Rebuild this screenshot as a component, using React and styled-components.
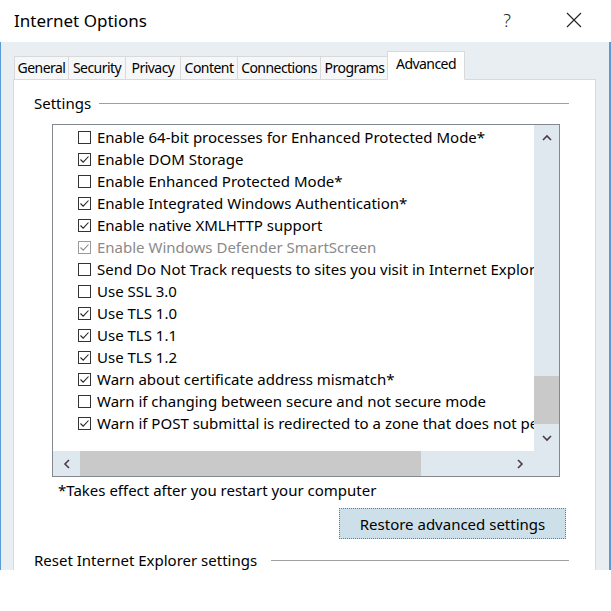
import React from 'react';
import styled, { createGlobalStyle } from 'styled-components';

const GlobalStyle = createGlobalStyle`
  html, body {
    margin: 0;
    padding: 0;
    background: #ffffff;
  }
  body {
    font-family: "Noto Sans", "Liberation Sans", sans-serif;
    color: #000;
  }
`;

const Window = styled.div`
  width: 611px;
  display: flex;
  flex-direction: column;
`;

const TitleBar = styled.div`
  height: 42px;
  display: flex;
  align-items: center;
  padding-left: 14px;
  background: #ffffff;
  font-size: 17px;
`;

const Title = styled.div`
  flex: 1;
  padding-bottom: 2px;
`;

const HelpButton = styled.div`
  width: 60px;
  text-align: center;
  font-size: 18px;
  font-weight: 300;
  color: #222;
  padding-bottom: 3px;
`;

const CloseButton = styled.div`
  width: 74px;
  display: flex;
  justify-content: center;
  padding-bottom: 3px;
`;

const Body = styled.div`
  height: 528px;
  overflow: hidden;
  box-sizing: border-box;
  background: #e8eef1;
  border-left: 1px solid #5b9bd5;
  border-right: 2px solid #5b9bd5;
  padding: 10px 12px 0 12px;
  display: flex;
  flex-direction: column;
`;

const TabStrip = styled.div`
  display: flex;
  align-items: flex-end;
  height: 28px;
  position: relative;
  z-index: 1;
  margin-bottom: -1px;
`;

const Tab = styled.div`
  box-sizing: border-box;
  width: ${p => p.$w}px;
  height: ${p => (p.$active ? 29 : 24)}px;
  padding-bottom: ${p => (p.$active ? 5 : 1)}px;
  display: flex;
  align-items: center;
  justify-content: center;
  white-space: nowrap;
  font-size: 14px;
  letter-spacing: -0.55px;
  background: ${p => (p.$active ? '#ffffff' : '#f6f7f8')};
  border: 1px solid #d9d9d9;
  border-bottom: ${p => (p.$active ? '1px solid #ffffff' : '1px solid #d9d9d9')};
  margin-left: ${p => (p.$first ? 1 : p.$active ? -2 : -1)}px;
  position: relative;
  z-index: ${p => (p.$active ? 2 : 1)};
`;

const Panel = styled.div`
  flex: 1;
  background: #ffffff;
  border: 1px solid #d9d9d9;
  margin-right: 1px;
  padding: 13px 26px 0 20px;
  display: flex;
  flex-direction: column;
`;

const GroupHeader = styled.div`
  display: flex;
  align-items: center;
  height: 20px;
  font-size: 15px;
`;

const GroupLine = styled.div`
  flex: 1;
  height: 1px;
  background: #a0a0a0;
  margin-left: ${p => p.$gap}px;
`;

const ListBox = styled.div`
  margin: 11px 9px 0 18px;
  height: 353px;
  box-sizing: border-box;
  border: 1px solid #828790;
  display: grid;
  grid-template-columns: 1fr 25px;
  grid-template-rows: 1fr 25px;
  overflow: hidden;
`;

const ListContent = styled.div`
  overflow: hidden;
  padding-top: 1px;
  display: flex;
  flex-direction: column;
`;

const Row = styled.div`
  height: 22px;
  display: flex;
  align-items: center;
  padding-left: 25px;
  white-space: nowrap;
  font-size: 15px;
  color: ${p => (p.$disabled ? '#8a8a8a' : '#000')};
`;

const Box = styled.span`
  width: 13px;
  height: 13px;
  box-sizing: border-box;
  border: 1px solid ${p => (p.$disabled ? '#9a9a9a' : '#333333')};
  background: #fff;
  margin-right: 6px;
  flex: none;
  display: flex;
  align-items: center;
  justify-content: center;
`;

const VScroll = styled.div`
  background: #dfe8ee;
  display: flex;
  flex-direction: column;
`;

const HScroll = styled.div`
  background: #dfe8ee;
  display: flex;
  align-items: stretch;
`;

const Corner = styled.div`
  background: #dfe8ee;
`;

const ArrowButton = styled.div`
  flex: none;
  width: ${p => p.$w || 25}px;
  height: ${p => p.$h || 25}px;
  display: flex;
  align-items: center;
  justify-content: center;
`;

const Track = styled.div`
  flex: 1;
  display: flex;
  flex-direction: ${p => (p.$vertical ? 'column' : 'row')};
`;

const Thumb = styled.div`
  background: #c9c9c9;
  flex: none;
  width: ${p => (p.$vertical ? '100%' : `${p.$size}px`)};
  height: ${p => (p.$vertical ? `${p.$size}px` : '100%')};
  margin-top: ${p => (p.$vertical ? `${p.$offset}px` : '0')};
  margin-bottom: ${p => (p.$vertical ? '1px' : '0')};
`;

const Note = styled.div`
  margin: 3px 0 0 24px;
  height: 20px;
  display: flex;
  align-items: center;
  font-size: 15px;
`;

const ButtonRow = styled.div`
  display: flex;
  justify-content: flex-end;
  margin: 8px 3px 0 0;
`;

const Button = styled.div`
  width: 227px;
  height: 31px;
  box-sizing: border-box;
  background: #cde0ea;
  outline: 1px dotted #7a7a7a;
  outline-offset: -1px;
  display: flex;
  align-items: center;
  justify-content: center;
  font-size: 15px;
`;

const Spacer = styled.div`
  height: 11px;
`;

const Check = ({ color }) => (
  <svg width="11" height="11" viewBox="0 0 11 11">
    <path d="M1.5 5.5 L4.2 8.2 L9.5 2.5" fill="none" stroke={color} strokeWidth="1.1" />
  </svg>
);

const Chevron = ({ dir }) => {
  const paths = {
    up: 'M1 6 L5 2 L9 6',
    down: 'M1 2 L5 6 L9 2',
    left: 'M6 1 L2 5 L6 9',
    right: 'M2 1 L6 5 L2 9',
  };
  const vertical = dir === 'up' || dir === 'down';
  return (
    <svg width={vertical ? 10 : 8} height={vertical ? 8 : 10} viewBox={vertical ? '0 0 10 8' : '0 0 8 10'}>
      <path d={paths[dir]} fill="none" stroke="#4a3a48" strokeWidth="1.6" />
    </svg>
  );
};

const tabs = [
  { label: 'General', w: 55 },
  { label: 'Security', w: 58 },
  { label: 'Privacy', w: 56 },
  { label: 'Content', w: 58 },
  { label: 'Connections', w: 84 },
  { label: 'Programs', w: 69 },
  { label: 'Advanced', w: 78, active: true },
];

const settings = [
  { label: 'Enable 64-bit processes for Enhanced Protected Mode*', on: false },
  { label: 'Enable DOM Storage', on: true },
  { label: 'Enable Enhanced Protected Mode*', on: false },
  { label: 'Enable Integrated Windows Authentication*', on: true },
  { label: 'Enable native XMLHTTP support', on: true },
  { label: 'Enable Windows Defender SmartScreen', on: true, disabled: true },
  { label: 'Send Do Not Track requests to sites you visit in Internet Explorer*', on: false },
  { label: 'Use SSL 3.0', on: false },
  { label: 'Use TLS 1.0', on: true },
  { label: 'Use TLS 1.1', on: true },
  { label: 'Use TLS 1.2', on: true },
  { label: 'Warn about certificate address mismatch*', on: true },
  { label: 'Warn if changing between secure and not secure mode', on: false },
  { label: 'Warn if POST submittal is redirected to a zone that does not permit posts', on: true },
];

export default function App() {
  return (
    <>
      <GlobalStyle />
      <Window>
        <TitleBar>
          <Title>Internet Options</Title>
          <HelpButton>?</HelpButton>
          <CloseButton>
            <svg width="16" height="16" viewBox="0 0 16 16">
              <path d="M1 1 L15 15 M15 1 L1 15" stroke="#222" strokeWidth="1.1" />
            </svg>
          </CloseButton>
        </TitleBar>
        <Body>
          <TabStrip>
            {tabs.map((t, i) => (
              <Tab key={t.label} $w={t.w} $active={t.active} $first={i === 0}>
                {t.label}
              </Tab>
            ))}
          </TabStrip>
          <Panel>
            <GroupHeader>
              Settings
              <GroupLine $gap={8} />
            </GroupHeader>
            <ListBox>
              <ListContent>
                {settings.map(s => (
                  <Row key={s.label} $disabled={s.disabled}>
                    <Box $disabled={s.disabled}>
                      {s.on && <Check color={s.disabled ? '#8a8a8a' : '#222'} />}
                    </Box>
                    {s.label}
                  </Row>
                ))}
              </ListContent>
              <VScroll>
                <ArrowButton $h={26}>
                  <Chevron dir="up" />
                </ArrowButton>
                <Track $vertical>
                  <Thumb $vertical $size={48} $offset={225} />
                </Track>
                <ArrowButton $h={26}>
                  <Chevron dir="down" />
                </ArrowButton>
              </VScroll>
              <HScroll>
                <ArrowButton $w={27}>
                  <Chevron dir="left" />
                </ArrowButton>
                <Track>
                  <Thumb $size={341} />
                </Track>
                <ArrowButton $w={28}>
                  <Chevron dir="right" />
                </ArrowButton>
              </HScroll>
              <Corner />
            </ListBox>
            <Note>*Takes effect after you restart your computer</Note>
            <ButtonRow>
              <Button>Restore advanced settings</Button>
            </ButtonRow>
            <Spacer />
            <GroupHeader>
              Reset Internet Explorer settings
              <GroupLine $gap={14} />
            </GroupHeader>
          </Panel>
        </Body>
      </Window>
    </>
  );
}
